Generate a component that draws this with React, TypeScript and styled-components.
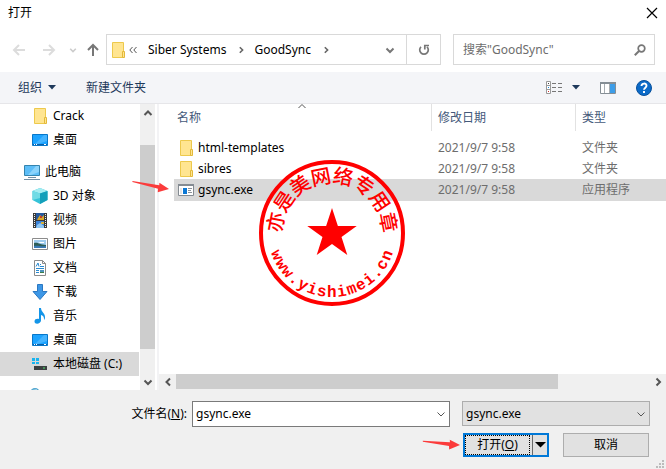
import React from "react";
import styled, { createGlobalStyle } from "styled-components";

const Global = createGlobalStyle`
  * { box-sizing: border-box; }
  body { margin: 0; background: #fff; }
  body, button, input, select {
    font-family: "Noto Sans", "Noto Sans CJK SC", sans-serif;
    font-size: 12px;
    line-height: 16px;
    color: #000;
  }
  button { background: none; border: 0; padding: 0; white-space: nowrap; }
  svg { display: block; flex: none; }
`;

const Dialog = styled.div`
  display: flex;
  flex-direction: column;
  height: 100vh;
  overflow: hidden;
`;

const TitleBar = styled.header`
  display: flex;
  justify-content: space-between;
  align-items: center;
  height: 26px;
  padding: 0 8px;
`;

const Title = styled.h1`
  margin: 0;
  font-size: 12px;
  font-weight: 400;
`;

const NavBar = styled.div`
  display: flex;
  align-items: stretch;
  height: 46px;
  padding: 8px 11px 7px 12px;
`;

const NavButtons = styled.div`
  display: flex;
  align-items: center;
  width: 94px;
`;

const IconButton = styled.button<{ $w: number }>`
  display: flex;
  justify-content: center;
  align-items: center;
  flex: none;
  width: ${(p) => p.$w}px;
`;

const AddressBar = styled.nav`
  display: flex;
  align-items: center;
  flex: 1;
  border: 1px solid #d9d9d9;
  padding-left: 3px;
`;

const Crumb = styled.button`
  padding: 0 10px 0 8px;
`;

const CrumbSeparator = styled.span`
  display: flex;
  justify-content: center;
  width: 10px;
`;

const AddressEnd = styled.div`
  display: flex;
  align-self: stretch;
  margin-left: auto;
`;

const Refresh = styled(IconButton)`
  border-left: 1px solid #d9d9d9;
`;

const Search = styled.label`
  display: flex;
  align-items: center;
  width: 202px;
  margin-left: 12px;
  padding: 0 8px;
  border: 1px solid #d9d9d9;
`;

const SearchInput = styled.input`
  flex: 1;
  min-width: 0;
  border: 0;
  outline: 0;
  padding: 0 0 0 1px;
  &::placeholder { color: #6d6d6d; opacity: 1; }
`;

const Toolbar = styled.div`
  display: flex;
  align-items: center;
  flex: none;
  height: 32px;
  padding: 0 14px 0 18px;
  background: #f4f5f8;
  border-bottom: 1px solid #e6e6e9;
`;

const ToolButton = styled.button`
  display: flex;
  align-items: center;
  gap: 6px;
  margin-right: 30px;
  color: #1e395b;
`;

const ToolIcons = styled.div`
  display: flex;
  align-items: center;
  gap: 20px;
  margin-left: auto;
`;

const ViewButton = styled.button`
  display: flex;
  align-items: center;
  gap: 10px;
`;

const Body = styled.div`
  display: flex;
  flex: 1;
  min-height: 0;
`;

const Tree = styled.ul`
  list-style: none;
  margin: 0;
  padding: 0;
  width: 140px;
  flex: none;
  overflow: hidden;
`;

const TreeRow = styled.li<{ $root?: boolean; $selected?: boolean }>`
  display: flex;
  align-items: center;
  gap: 5px;
  height: 24px;
  margin: ${(p) => (p.$root ? "8px 1px 0 0" : "0 1px 0 0")};
  padding-left: ${(p) => (p.$root ? 24 : 32)}px;
  background: ${(p) => (p.$selected ? "#d9d9d9" : "transparent")};
  white-space: nowrap;
`;

const VScroll = styled.div`
  display: flex;
  flex-direction: column;
  align-items: center;
  width: 15px;
  flex: none;
  background: #f0f0f0;
`;

const VThumb = styled.div`
  width: 100%;
  margin: 24px 0;
  flex: 1;
  background: #cdcdcd;
`;

const ScrollButton = styled.button<{ $size: number }>`
  display: flex;
  align-items: center;
  justify-content: center;
  flex: none;
  width: 17px;
  height: ${(p) => p.$size}px;
`;

const FilePane = styled.main`
  position: relative;
  display: flex;
  flex-direction: column;
  flex: 1;
  min-width: 0;
  margin-left: 2px;
  border-left: 2px solid #f3f3f5;
`;

const FileTable = styled.table`
  width: calc(100% - 15px);
  margin-left: 15px;
  border-collapse: separate;
  border-spacing: 0;
  table-layout: fixed;
`;

const NameCol = styled.col``;
const DateCol = styled.col`
  width: 144px;
`;
const TypeCol = styled.col`
  width: 91px;
`;

const Th = styled.th`
  position: relative;
  height: 27px;
  padding: 0 0 0 6px;
  text-align: left;
  font-weight: 400;
  color: #44597a;
  & + & { border-left: 1px solid #e2e2e2; }
  &:first-child { padding-left: 3px; }
`;

const SortMark = styled.span`
  position: absolute;
  top: -3px;
  left: 50%;
  margin-left: -6px;
`;

const FileBody = styled.tbody`
  &::before { content: ""; display: table-row; height: 6px; }
`;

const Row = styled.tr<{ $selected?: boolean }>`
  height: ${(p) => (p.$selected ? 22 : 21)}px;
  background: ${(p) => (p.$selected ? "#d9d9d9" : "transparent")};
`;

const Td = styled.td`
  padding: 0 0 0 7px;
  color: #6d6d6d;
`;

const NameTd = styled.td`
  padding: 0 0 0 4px;
`;

const NameCell = styled.div`
  display: flex;
  align-items: center;
  gap: 4px;
`;

const HScroll = styled.div`
  display: flex;
  height: 16px;
  margin-top: auto;
  background: #f0f0f0;
`;

const HThumb = styled.div`
  flex: 1;
  height: 15px;
  margin-right: 91px;
  background: #cdcdcd;
`;

const Stamp = styled.svg`
  position: absolute;
  left: 99px;
  top: 55px;
`;

const TreeArrow = styled.svg`
  position: absolute;
  left: -28px;
  top: 76px;
`;

const Footer = styled.footer`
  position: relative;
  display: grid;
  grid-template-columns: 187px 1fr 188px;
  align-content: start;
  row-gap: 6px;
  flex: none;
  height: 79px;
  padding: 11px 16px 0 0;
  background: #f0f0f0;
`;

const FieldLabel = styled.label`
  padding-top: 5px;
  text-align: right;
`;

const Combo = styled.div`
  display: flex;
  align-items: center;
  height: 26px;
  margin: 0 12px 0 5px;
  border: 1px solid #7a7a7a;
  background: #fff;
`;

const NameInput = styled.input`
  flex: 1;
  min-width: 0;
  padding: 0 3px;
  border: 0;
  outline: 0;
  background: none;
`;

const SelectWrap = styled.div`
  display: grid;
  align-items: center;
  height: 25px;
  & > * { grid-area: 1 / 1; }
  & > svg { justify-self: end; margin-right: 4px; pointer-events: none; }
`;

const TypeSelect = styled.select`
  appearance: none;
  width: 100%;
  height: 25px;
  padding: 0 3px;
  border: 1px solid #adadad;
  border-radius: 0;
  background: #e1e1e1;
`;

const Actions = styled.div`
  position: relative;
  grid-column: 3;
  display: flex;
  justify-content: space-between;
  height: 24px;
  padding: 0 1px;
`;

const OpenGroup = styled.div`
  display: flex;
  width: 86px;
  border: 2px solid #0078d7;
  background: #e1e1e1;
`;

const OpenButton = styled.button`
  flex: 1;
  border: 1px dotted #000;
  line-height: 14px;
`;

const OpenMore = styled.button`
  display: flex;
  align-items: center;
  justify-content: center;
  width: 15px;
  margin-left: 2px;
  border-left: 1px solid #6a6a6a;
`;

const CancelButton = styled.button`
  width: 86px;
  border: 1px solid #adadad;
  background: #e1e1e1;
`;

const OpenArrow = styled.svg`
  position: absolute;
  left: -40px;
  top: 3px;
`;

const Grip = styled.svg`
  position: absolute;
  right: 2px;
  bottom: 1px;
`;

type ChevronProps = { dir: "up" | "down" | "left" | "right"; size?: number; color?: string; weight?: number };

const chevrons = {
  up: "M1.5 7 L5 3.5 L8.5 7",
  down: "M1.5 3.5 L5 7 L8.5 3.5",
  left: "M7 1.5 L3.5 5 L7 8.5",
  right: "M3.5 1.5 L7 5 L3.5 8.5",
};

const Chevron = ({ dir, size = 10, color = "#555", weight = 2 }: ChevronProps) => (
  <svg width={size} height={size} viewBox="0 0 10 10" fill="none" stroke={color} strokeWidth={weight}>
    <path d={chevrons[dir]} />
  </svg>
);

const Caret = ({ color = "#1e395b", width = 8 }: { color?: string; width?: number }) => (
  <svg width={width} height={width > 8 ? 6 : 5} viewBox="0 0 8 5" preserveAspectRatio="none">
    <path d="M0 0H8L4 4.6Z" fill={color} />
  </svg>
);

const NavArrow = ({ angle, color }: { angle: number; color: string }) => (
  <svg width="14" height="14" viewBox="0 0 14 14" fill="none" stroke={color} strokeWidth="2">
    <path d="M13 7H2M7 2L2 7L7 12" transform={`rotate(${angle} 7 7)`} />
  </svg>
);

const FolderIcon = () => (
  <svg width="16" height="16" viewBox="0 0 16 16">
    <path d="M2.5.5H13.5V15.5H2.5Z" fill="#ffe591" stroke="#edc94c" />
    <path d="M12.5 9.5H14.5V15.5H12.5Z" fill="#ffe591" stroke="#e3b93a" />
  </svg>
);

const DesktopIcon = () => (
  <svg width="16" height="16" viewBox="0 0 16 16">
    <path d="M.5 2.5H15.5V13.5H.5Z" fill="#1ca3ff" stroke="#0877c9" />
    <path d="M15 3V9L6 12H3L12 3Z" fill="#45b4ff" />
    <path d="M1 12.5H15" stroke="#0a5fa8" />
    <path d="M2 12.5H3M4 12.5H5M12 12.5H14" stroke="#fff" />
  </svg>
);

const ComputerIcon = () => (
  <svg width="16" height="16" viewBox="0 0 16 16">
    <path d="M.5 1.5H15.5V11.5H.5Z" fill="#5cbdf7" stroke="#3484ae" />
    <path d="M15 2V8L7 11H4L12 2Z" fill="#8bd3fb" />
    <path d="M4 13.500H12M0 15.500H16" stroke="#7590a5" strokeWidth="1" />
  </svg>
);

const CubeIcon = () => (
  <svg width="16" height="16" viewBox="0 0 16 16">
    <path d="M8 0L15.5 3V12L8 16L.5 12V3Z" fill="#35c3d8" />
    <path d="M8 0L15.5 3L8 5.5L.5 3Z" fill="#a5edf2" />
    <path d="M8 5.5L15.5 3V12L8 16Z" fill="#149fba" />
    <path d="M.5 3L8 5.5V10L.5 12Z" fill="#70dbe5" />
  </svg>
);

const VideoIcon = () => (
  <svg width="16" height="16" viewBox="0 0 16 16">
    <path d="M1 1H15V16H1Z" fill="#3a3a3a" />
    <path d="M4 1H12V8H4Z" fill="#26599d" />
    <path d="M4 9H12V16H4Z" fill="#3a82d8" />
    <path d="M6 6L8 3L10 5L12 3V8H5Z" fill="#d8a72a" />
    <path d="M8 4H10V6H8Z" fill="#c33b2e" />
    <path d="M5 13L8 11L12 14V16H4Z" fill="#8dc5f2" />
    <path d="M9 10H12V12H9Z" fill="#d8b23a" />
    <path d="M2.5 2V16M13.5 2V16" stroke="#eee" strokeDasharray="1 1" />
  </svg>
);

const PictureIcon = () => (
  <svg width="16" height="16" viewBox="0 0 16 16">
    <path d="M.5 2.5H15.5V13.5H.5Z" fill="#fff" stroke="#8c8c8c" />
    <path d="M2 4H14V12H2Z" fill="#9ecbee" />
    <path d="M2 7C6 6 8 9 14 9V12H2Z" fill="#2e5e57" />
    <path d="M2 10C6 9 9 11 14 10V12H2Z" fill="#3979b5" />
    <path d="M6 6H12V7H8Z" fill="#fff" />
  </svg>
);

const DocumentIcon = () => (
  <svg width="16" height="16" viewBox="0 0 16 16">
    <path d="M2.500 .5H10.500L13.500 3.500V15.500H2.500Z" fill="#fff" stroke="#8b8b8b" />
    <path d="M10.500 .5V3.500H13.500" fill="none" stroke="#8b8b8b" />
    <path d="M4 6.500L6 3L7 6.500M8 4.500H9M8 6.500H12M4 8.500H12M4 10.500H7M4 12.500H7" fill="none" stroke="#2a8ad0" />
    <path d="M8 10H12V13H8Z" fill="#4c93bb" />
    <path d="M8 12H12V13H8Z" fill="#3c7d4a" />
  </svg>
);

const DownloadIcon = () => (
  <svg width="16" height="16" viewBox="0 0 16 16">
    <path d="M5.500 .5H10.500V7.500H15L8 15.500L1 7.500H5.500Z" fill="#3d97e6" stroke="#2b78c2" />
  </svg>
);

const MusicIcon = () => (
  <svg width="16" height="16" viewBox="0 0 16 16">
    <path d="M7 0H9C9 4 13.500 5 13 10C12.800 11 12.500 11.500 12 12C12.300 9 11 7.500 9 7V12.500C9 16 2.500 17 2.500 13.500C2.500 11 5 10.500 7 11Z" fill="#1495e8" />
  </svg>
);

const DiskIcon = () => (
  <svg width="16" height="16" viewBox="0 0 16 16">
    <path d="M0 2H3V5H0ZM4 2H7V5H4ZM0 6H3V8H0ZM4 6H7V8H4Z" fill="#18b4ef" />
    <path d="M4 8H13L15 10H2Z" fill="#d3d5d6" />
    <path d="M2 10H15V14H2Z" fill="#3b3f41" />
    <path d="M11 12H13" stroke="#50e36c" />
  </svg>
);

const NetworkIcon = () => (
  <svg width="16" height="16" viewBox="0 0 16 16">
    <circle cx="11" cy="5" r="5" fill="#4fa5cf" />
    <path d="M8 2L13 1L12 5Z" fill="#b8dceb" />
  </svg>
);

const ExeIcon = () => (
  <svg width="16" height="16" viewBox="0 0 16 16">
    <path d="M.5 2.500H15.500V13.500H.5Z" fill="#fff" stroke="#848b92" />
    <path d="M0 2H16V4H0Z" fill="#848b92" />
    <path d="M5 6H9V12H5Z" fill="#0c78d4" />
    <path d="M2 6H4V12H2Z" fill="#e6e6e6" />
    <path d="M10 6.500H14M10 8.500H13M10 10.500H14" stroke="#8b9299" />
  </svg>
);

const RedArrow = ({ as: Place, slope }: { as: React.ElementType; slope: number }) => (
  <Place width="40" height="14" viewBox="0 0 40 14" aria-hidden="true">
    <g fill="#fb3b3b" transform={`rotate(${slope} 38 9)`}>
      <path d="M1 3.500L28 6V3.500L38 9L27 13V9.500L1 4.500Z" />
    </g>
  </Place>
);

const toRad = (deg: number) => (deg * Math.PI) / 180;

/* Places each glyph of a string on a circle; `side` is 1 on the top arc and -1 on the bottom arc. */
const arc = (count: number, radius: number, first: number, advance: number, drop: number, side: 1 | -1) => {
  const xs: number[] = [];
  const ys: number[] = [];
  const turns: number[] = [];
  for (let i = 0; i < count; i++) {
    const turn = side * (first - (2 * first * i) / (count - 1)) * -1;
    const a = toRad(turn);
    const dx = -advance / 2;
    const dy = -side * radius + drop;
    xs.push(74 + dx * Math.cos(a) - dy * Math.sin(a));
    ys.push(74 + dx * Math.sin(a) + dy * Math.cos(a));
    turns.push(turn);
  }
  return { x: xs.join(" "), y: ys.join(" "), rotate: turns.join(" ") };
};

const starPoints = Array.from({ length: 10 }, (_, i) => {
  const r = i % 2 ? 10 : 26;
  const a = toRad(i * 36);
  return `${74 + r * Math.sin(a)},${75 - r * Math.cos(a)}`;
}).join(" ");

const Seal = () => (
  <Stamp width="148" height="148" viewBox="0 0 148 148" fill="#f00">
    <circle cx="74" cy="74" r="71" fill="none" stroke="#f00" strokeWidth="4" />
    <polygon points={starPoints} />
    <text fontFamily="Noto Sans CJK SC" fontSize="20" fontWeight="500" {...arc(8, 57, 79, 20, 7, 1)}>
      亦是美网络专用章
    </text>
    <text fontFamily="Liberation Mono" fontSize="16" fontWeight="700" {...arc(15, 60, 68, 10, 4, -1)}>
      www.yishimei.cn
    </text>
  </Stamp>
);

const tree = [
  { label: "Crack", icon: <FolderIcon /> },
  { label: "桌面", icon: <DesktopIcon /> },
  { label: "此电脑", icon: <ComputerIcon />, root: true },
  { label: "3D 对象", icon: <CubeIcon /> },
  { label: "视频", icon: <VideoIcon /> },
  { label: "图片", icon: <PictureIcon /> },
  { label: "文档", icon: <DocumentIcon /> },
  { label: "下载", icon: <DownloadIcon /> },
  { label: "音乐", icon: <MusicIcon /> },
  { label: "桌面", icon: <DesktopIcon /> },
  { label: "本地磁盘 (C:)", icon: <DiskIcon />, selected: true },
  { label: "", icon: <NetworkIcon />, root: true },
];

const files = [
  { name: "html-templates", type: "文件夹", icon: <FolderIcon /> },
  { name: "sibres", type: "文件夹", icon: <FolderIcon /> },
  { name: "gsync.exe", type: "应用程序", icon: <ExeIcon />, selected: true },
];

export default function App() {
  return (
    <Dialog>
      <Global />
      <TitleBar>
        <Title>打开</Title>
        <IconButton $w={12} aria-label="关闭">
          <svg width="12" height="12" viewBox="0 0 12 12" stroke="#000" strokeWidth="1.2">
            <path d="M1 1L11 11M11 1L1 11" />
          </svg>
        </IconButton>
      </TitleBar>

      <NavBar>
        <NavButtons>
          <IconButton $w={14} aria-label="后退"><NavArrow angle={0} color="#dcdcdc" /></IconButton>
          <IconButton $w={46} aria-label="前进"><NavArrow angle={180} color="#dcdcdc" /></IconButton>
          <IconButton $w={2} aria-label="最近"><Chevron dir="down" size={8} color="#ccc" /></IconButton>
          <IconButton $w={38} aria-label="上移"><NavArrow angle={90} color="#777" /></IconButton>
        </NavButtons>
        <AddressBar aria-label="地址">
          <FolderIcon />
          <IconButton $w={14} aria-label="更多">
            <svg width="8" height="8" viewBox="0 0 8 8" fill="none" stroke="#555">
              <path d="M3.500 1L.8 4L3.500 7M7.500 1L4.800 4L7.500 7" />
            </svg>
          </IconButton>
          <Crumb>Siber Systems</Crumb>
          <CrumbSeparator><Chevron dir="right" size={8} color="#666" /></CrumbSeparator>
          <Crumb>GoodSync</Crumb>
          <CrumbSeparator><Chevron dir="right" size={8} color="#666" /></CrumbSeparator>
          <AddressEnd>
            <IconButton $w={32} aria-label="展开"><Chevron dir="down" color="#777" /></IconButton>
            <Refresh $w={34} aria-label="刷新">
              <svg width="12" height="12" viewBox="0 0 12 12" fill="none" stroke="#777" strokeWidth="1.700">
                <path d="M3 2.800A4.300 4.300 0 1 0 9 2.800" />
                <path d="M6.800 5.500V1.500H11" />
              </svg>
            </Refresh>
          </AddressEnd>
        </AddressBar>
        <Search>
          <SearchInput type="text" placeholder={'搜索"GoodSync"'} aria-label="搜索" />
          <svg width="12" height="12" viewBox="0 0 12 12" fill="none" stroke="#777" strokeWidth="2">
            <circle cx="7.500" cy="4.500" r="3.300" strokeWidth="1.700" />
            <path d="M5 7L.8 11.200" />
          </svg>
        </Search>
      </NavBar>

      <Toolbar>
        <ToolButton>组织 <Caret /></ToolButton>
        <ToolButton>新建文件夹</ToolButton>
        <ToolIcons>
          <ViewButton aria-label="视图">
            <svg width="16" height="14" viewBox="0 0 16 14" fill="none">
              <path d="M.5 .5H4.500V12.500H.5ZM.5 4.500H4.500M.5 8.500H4.500" stroke="#999" fill="#fff" />
              <path d="M6 2.500H10M12 2.500H16M6 6.500H10M12 6.500H16M6 10.500H10M12 10.500H16" stroke="#777" />
              <path d="M2 2.500H3" stroke="#444" />
              <path d="M2 6.500H3" stroke="#1587dd" />
              <path d="M2 10.500H3" stroke="#d03030" />
            </svg>
            <Caret />
          </ViewButton>
          <IconButton $w={16} aria-label="预览窗格">
            <svg width="16" height="12" viewBox="0 0 16 12">
              <path d="M.5 .5H15.500V11.500H.5Z" fill="#fff" stroke="#858e95" />
              <path d="M0 0H16V2H0Z" fill="#858e95" />
              <path d="M4.500 2V11M9.500 2V11" stroke="#a7adb2" />
              <path d="M10 2H15V11H10Z" fill="#3d9de8" />
            </svg>
          </IconButton>
          <IconButton $w={16} aria-label="帮助">
            <svg width="16" height="16" viewBox="0 0 16 16">
              <circle cx="8" cy="8" r="7.500" fill="#0b6ac8" stroke="#08509c" />
              <path d="M5.500 6C5.500 2.800 10.500 2.800 10.500 5.800C10.500 7.700 8 7.600 8 9.800M8 11V13" fill="none" stroke="#fff" strokeWidth="1.900" />
            </svg>
          </IconButton>
        </ToolIcons>
      </Toolbar>

      <Body>
        <Tree>
          {tree.map((item, i) => (
            <TreeRow key={i} $root={item.root} $selected={item.selected}>
              {item.icon}
              {item.label}
            </TreeRow>
          ))}
        </Tree>
        <VScroll>
          <ScrollButton $size={17} aria-label="向上滚动"><Chevron dir="up" /></ScrollButton>
          <VThumb />
          <ScrollButton $size={17} aria-label="向下滚动"><Chevron dir="down" /></ScrollButton>
        </VScroll>
        <FilePane>
          <FileTable>
            <colgroup><NameCol /><DateCol /><TypeCol /></colgroup>
            <thead>
              <tr>
                <Th>名称<SortMark><Chevron dir="up" weight={1} /></SortMark></Th>
                <Th>修改日期</Th>
                <Th>类型</Th>
              </tr>
            </thead>
            <FileBody>
              {files.map((file) => (
                <Row key={file.name} $selected={file.selected}>
                  <NameTd><NameCell>{file.icon}{file.name}</NameCell></NameTd>
                  <Td>2021/9/7 9:58</Td>
                  <Td>{file.type}</Td>
                </Row>
              ))}
            </FileBody>
          </FileTable>
          <Seal />
          <RedArrow as={TreeArrow} slope={4} />
          <HScroll>
            <ScrollButton $size={16} aria-label="向左滚动"><Chevron dir="left" /></ScrollButton>
            <HThumb />
            <ScrollButton $size={16} aria-label="向右滚动"><Chevron dir="right" /></ScrollButton>
          </HScroll>
        </FilePane>
      </Body>

      <Footer>
        <FieldLabel htmlFor="file-name">文件名(<u>N</u>):</FieldLabel>
        <Combo>
          <NameInput id="file-name" type="text" defaultValue="gsync.exe" />
          <IconButton $w={17} aria-label="历史文件名"><Chevron dir="down" weight={1} /></IconButton>
        </Combo>
        <SelectWrap>
          <TypeSelect aria-label="文件类型" defaultValue="gsync.exe">
            <option>gsync.exe</option>
          </TypeSelect>
          <Chevron dir="down" weight={1} />
        </SelectWrap>
        <Actions>
          <OpenGroup>
            <OpenButton>打开(<u>O</u>)</OpenButton>
            <OpenMore aria-label="打开选项"><Caret color="#000" width={11} /></OpenMore>
          </OpenGroup>
          <CancelButton>取消</CancelButton>
          <RedArrow as={OpenArrow} slope={-2} />
        </Actions>
        <Grip width="8" height="8" viewBox="0 0 8 8" fill="#bcbcbc">
          <path d="M6 0H8V2H6ZM3 3H5V5H3ZM6 3H8V5H6ZM0 6H2V8H0ZM3 6H5V8H3ZM6 6H8V8H6Z" />
        </Grip>
      </Footer>
    </Dialog>
  );
}
